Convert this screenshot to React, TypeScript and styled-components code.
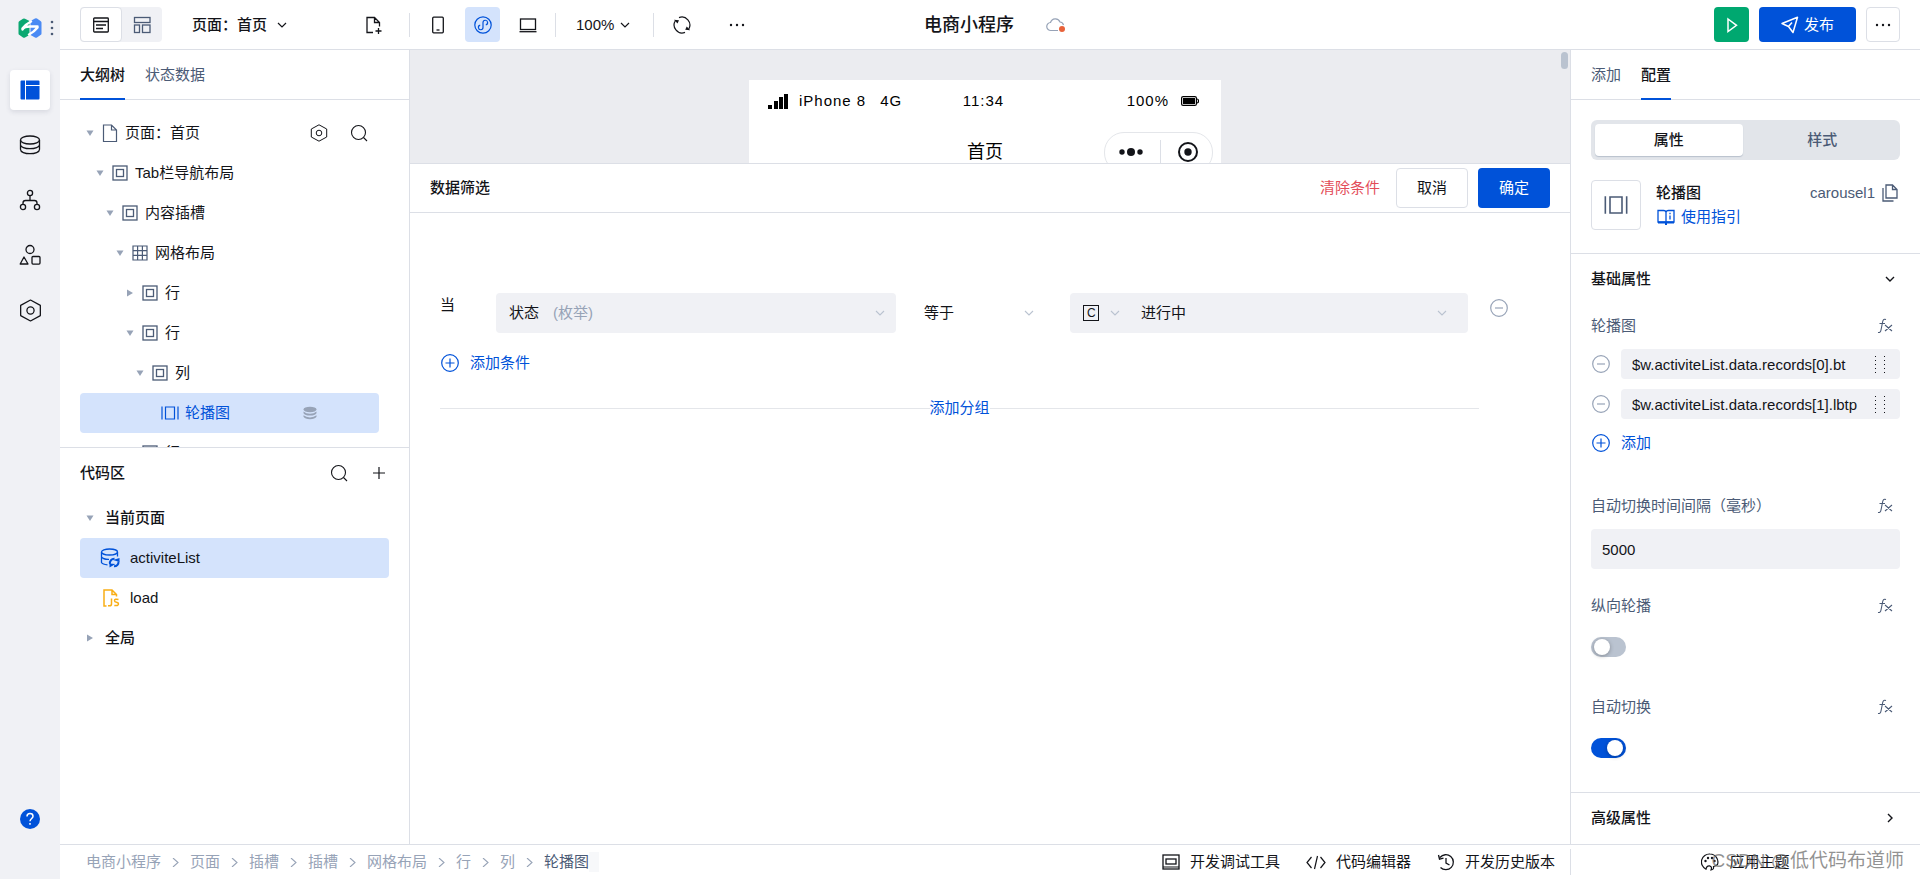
import React from "react";
import styled, { createGlobalStyle, css } from "styled-components";

const c = {
  ink: "#131419",
  muted: "#4b5b76",
  faint: "#97a3b7",
  line: "#dcdfe6",
  fill: "#f0f1f5",
  blue: "#0052d9",
  pale: "#d4e3fc",
  green: "#00a870",
  red: "#e34d59",
};

const GlobalStyle = createGlobalStyle`
  *, *::before, *::after { box-sizing: border-box; }
  body {
    margin: 0;
    background: #fff;
    color: ${c.ink};
    font: 15px/20px "Liberation Sans", "Noto Sans CJK SC", sans-serif;
  }
  button, input, select { font: inherit; color: inherit; margin: 0; }
  button { background: none; border: 0; padding: 0; cursor: pointer; white-space: nowrap; }
  a { color: inherit; text-decoration: none; white-space: nowrap; }
  svg { display: block; flex: none; }
`;

/* ---------- icons ---------- */

type IconProps = { size?: number; color?: string; width?: number };

const Svg = ({
  size = 18,
  color = "currentColor",
  width = 1.3,
  box = 18,
  children,
}: IconProps & { box?: number; children: React.ReactNode }) => (
  <svg
    width={size}
    height={size}
    viewBox={`0 0 ${box} ${box}`}
    fill="none"
    stroke={color}
    strokeWidth={width}
    aria-hidden="true"
  >
    {children}
  </svg>
);

const Chevron = ({ size = 10, color, width = 1.2, right }: IconProps & { right?: boolean }) => (
  <Svg size={size} color={color} width={width} box={10}>
    <path d={right ? "M3 1l4 4-4 4" : "M1 3l4 4 4-4"} />
  </Svg>
);
const Crumb = () => (
  <Svg size={9} color={c.faint} width={1.1} box={9}>
    <path d="M2 0l5 4.5L2 9" />
  </Svg>
);
const Caret = ({ right }: { right?: boolean }) => (
  <svg width="8" height="8" viewBox="0 0 8 8" fill={c.faint} aria-hidden="true">
    <path d={right ? "M1 .5L7 4 1 7.5z" : "M.5 1.5h7L4 7z"} />
  </svg>
);
const Logo = () => (
  <svg width="24" height="20" viewBox="0 0 24 20" aria-hidden="true">
    <path d="M.5 4.500Q.5 3.500 1.500 3L5 .7Q6 .2 7 .7L11.500 3V17L7 19.400Q6 20 5 19.400L1.500 17Q.5 16.500 .5 15.500z" fill="#0ba871" />
    <path d="M12.500 3L17 .6Q18 0 19 .6L22.500 3Q23.500 3.500 23.500 4.500V15.500Q23.500 16.500 22.500 17L19 19.400Q18 20 17 19.400L12.500 17z" fill="#4a8af4" />
    <path d="M4.500 10.500Q8 6 13 3.500M4.500 11.500Q6 8.500 12 8.500T19.500 8.500M19.500 9.500Q16 14 11 16.500" stroke="#fff" strokeWidth="2.500" strokeLinecap="round" fill="none" />
  </svg>
);
const Dots = ({ vertical }: { vertical?: boolean }) => (
  <svg width={vertical ? 4 : 18} height={vertical ? 18 : 4} fill="currentColor" aria-hidden="true">
    {[0, 1, 2].map((i) =>
      vertical ? (
        <circle key={i} cx="2" cy={3 + i * 6} r="1.3" />
      ) : (
        <circle key={i} cx={3 + i * 6} cy="2" r="1.2" />
      ),
    )}
  </svg>
);
const PanelIcon = () => (
  <svg width="20" height="20" viewBox="0 0 20 20" fill={c.blue} aria-hidden="true">
    <path d="M1.500.5H5V19.500H1.500Q.5 19.500.5 18.500V1.500Q.5.5 1.500.5zM6 .5H18.500Q19.500.5 19.500 1.500V5H6zM6 6H19.500V18.500Q19.500 19.500 18.500 19.500H6z" />
  </svg>
);
const Database = () => (
  <Svg size={22} box={22}>
    <ellipse cx="11" cy="6" rx="9.500" ry="4" />
    <path d="M1.500 6V15.500C1.500 18 6 19.700 11 19.700S20.500 18 20.500 15.500V6M1.500 10.800C1.500 13 6 14.700 11 14.700S20.500 13 20.500 10.800" />
  </Svg>
);
const Tree = () => (
  <Svg size={22} box={22}>
    <circle cx="11" cy="4" r="2.600" />
    <circle cx="4" cy="18" r="2.600" />
    <circle cx="18" cy="18" r="2.600" />
    <path d="M11 6.600V11.500M4 15.400V14Q4 11.500 6.500 11.500H15.500Q18 11.500 18 14V15.400" />
  </Svg>
);
const Shapes = () => (
  <Svg size={22} box={22}>
    <circle cx="11" cy="5.500" r="4" />
    <path d="M5 13L9 20H1.200z" strokeLinejoin="round" />
    <rect x="13" y="12.500" width="8" height="7.600" rx="1" />
  </Svg>
);
const Hexagon = ({ size = 18, color }: IconProps) => (
  <Svg size={size} color={color} width={1}>
    <path d="M9 .8L16.700 5V13L9 17.200 1.300 13V5z" strokeLinejoin="round" />
    <circle cx="9" cy="9" r="2.800" />
  </Svg>
);
const HelpIcon = () => (
  <svg width="20" height="20" viewBox="0 0 20 20" fill="none" aria-hidden="true">
    <circle cx="10" cy="10" r="10" fill={c.blue} />
    <path d="M7 7.500C7 5.500 8.300 4.500 10 4.500S13 5.600 13 7.200C13 9.500 10 9.500 10 12.300M10 14V15.800" stroke="#fff" strokeWidth="1.500" />
  </svg>
);
const ListView = () => (
  <Svg width={1.3}>
    <rect x="1.700" y="2" width="14.600" height="14" rx=".8" />
    <path d="M1.700 5.500H16.300M4 9H14M4 12.500H11" />
  </Svg>
);
const GridView = () => (
  <Svg>
    <rect x="1.500" y="1.500" width="15.500" height="5" />
    <rect x="1.500" y="9" width="5" height="7.500" />
    <rect x="9.500" y="9" width="7.500" height="7.500" />
  </Svg>
);
const PageAdd = () => (
  <Svg>
    <path d="M8 16.500H2V1.500H9.500L14.500 6.500V10.500M9.500 1.500V6.500H14.500M13.500 12V18M10.500 15H16.500" />
  </Svg>
);
const PhoneIcon = () => (
  <Svg width={1.3}>
    <rect x="3.700" y="1.200" width="10.600" height="15.600" rx="1" />
    <path d="M7.500 14H10.500" />
  </Svg>
);
const MiniIcon = () => (
  <Svg width={1.2} color={c.blue}>
    <circle cx="9" cy="9" r="8.200" />
    <path d="M9 6.500V11.500A2.300 2.300 0 1 1 6.200 9.200M9 11.500V6.500A2.300 2.300 0 1 1 11.800 8.800" />
  </Svg>
);
const Laptop = () => (
  <Svg>
    <rect x="1.500" y="3" width="15" height="10.500" />
    <path d="M.5 15.700H17.500" />
  </Svg>
);
const Refresh = () => (
  <Svg width={1.200}>
    <path d="M6 1.600A8 8 0 0 1 15.800 13M12 16.400A8 8 0 0 1 2.500 4.500" />
    <path d="M1 3.800L6 4.200 4.500 7.500zM17.200 14.200L12.200 13.800 13.700 10.500z" fill="currentColor" stroke="none" />
  </Svg>
);
const CloudIcon = () => (
  <svg width="20" height="16" viewBox="0 0 20 16" fill="none" aria-hidden="true">
    <path d="M12 13.500H5A4 4 0 0 1 4.500 5.500 5 5 0 0 1 14 5 4 4 0 0 1 17.500 8" stroke={c.faint} strokeWidth="1.200" />
    <circle cx="16" cy="12" r="3" fill="#e8623a" />
  </svg>
);
const PlayIcon = () => (
  <Svg color="#fff" width={1.5}>
    <path d="M5 3L13.500 9.300 5 15.500z" />
  </Svg>
);
const SendIcon = () => (
  <Svg color="#fff" width={1.5}>
    <path d="M1 7.500L16.500 1.300 12 16.500 7.500 10.500zM7.500 10.500L11 6.500" strokeLinejoin="round" />
  </Svg>
);
const SearchIcon = () => (
  <Svg width={1.100}>
    <circle cx="8.500" cy="8.500" r="7" />
    <path d="M13.500 13.500L17 17" />
  </Svg>
);
const PlusIcon = () => (
  <Svg width={1.200}>
    <path d="M9 3V15M3 9H15" />
  </Svg>
);
const FileIcon = () => (
  <Svg color={c.muted} width={1.200}>
    <path d="M2.500 1H10.500L15.500 6V17.500H2.500zM10.500 1V6H15.500" />
  </Svg>
);
const BoxIcon = () => (
  <Svg size={16} box={16} color={c.muted} width={1.300}>
    <rect x="1" y="1" width="14" height="14" />
    <rect x="4.500" y="4.500" width="7" height="7" />
  </Svg>
);
const TableIcon = () => (
  <Svg size={16} box={16} color={c.muted} width={1.200}>
    <path d="M1 1H15V15H1zM5.600 1V15M10.400 1V15M1 5.600H15M1 10.400H15" />
  </Svg>
);
const CarouselIcon = ({ size = 18, color = c.blue }: IconProps) => (
  <Svg size={size} color={color} width={1.200}>
    <path d="M1 2.500V15.500M17 2.500V15.500M4.500 3H13.500V15H4.500z" />
  </Svg>
);
const StackIcon = () => (
  <svg width="14" height="14" viewBox="0 0 14 14" fill={c.faint} aria-hidden="true">
    <ellipse cx="7" cy="3.500" rx="6.500" ry="2.700" />
    <path d="M.5 5.500Q3 7.800 7 7.800T13.500 5.500V7.200Q12 9.500 7 9.500T.5 7.200zM.5 9.300Q3 11.400 7 11.400T13.500 9.300V10.800Q12 13.200 7 13.200T.5 10.800z" />
  </svg>
);
const DataSync = () => (
  <Svg size={20} box={20} color={c.blue} width={1.300}>
    <ellipse cx="9.500" cy="4" rx="8" ry="3" />
    <path d="M1.500 4V14.500Q2.500 16.500 7.500 16.800M17.500 4V8.500M1.500 9Q3.500 11.500 9 11.300" />
    <path d="M10 16A4.300 4.300 0 0 1 14.500 10.800M18.500 13.500A4.300 4.300 0 0 1 14 18.300" strokeWidth="2" />
    <path d="M13 12L19.500 10V14zM15.500 16L9.500 15.500V19.500z" fill={c.blue} stroke="none" />
  </Svg>
);
const ScriptIcon = () => (
  <Svg size={20} box={20} color="#f9ae16" width={1.500}>
    <path d="M6.500 18H4V2H12L16.500 6.500V8.500M12 2V6.500H16.500" />
    <path d="M11.500 10.500V16Q11.500 17.800 9.500 17.800H8M18.500 11.500Q14.500 10.500 14.500 12.700 14.500 14 16.500 14.300 18.500 14.700 18.500 16 18.300 18.200 14.300 17.400" />
  </Svg>
);
const CircleSign = ({ plus, color = c.faint }: { plus?: boolean; color?: string }) => (
  <Svg color={color} width={1.200}>
    <circle cx="9" cy="9" r="8.300" />
    <path d={plus ? "M9 4.500V13.500M4.500 9H13.500" : "M5 9H13"} />
  </Svg>
);
const FormulaIcon = () => (
  <Svg size={16} box={16} width={1.100}>
    <path d="M9 1.500Q6.300.4 5.700 3.500L4 12Q3.500 15 1 14.500M2.500 5.500H8M8 7L15 13M15 7L8 13" />
  </Svg>
);
const GuideIcon = () => (
  <Svg color={c.blue} width={1.300}>
    <path d="M9 3.500V15.500M1 2.500H6.500Q9 2.500 9 4.500 9 2.500 11.500 2.500H17V14H1z" />
    <path d="M1 14.500H17M9 14V17" strokeWidth="2" />
    <path d="M13 7.500V11.500M13 4.800V6.200" />
  </Svg>
);
const CopyIcon = () => (
  <Svg color={c.muted} width={1.300}>
    <path d="M5 1H11.500L16 5.500V14H5zM11.500 1V5.500H16M2 4V17H12.500" />
  </Svg>
);
const GripIcon = () => (
  <svg width="12" height="18" fill={c.ink} aria-hidden="true">
    {[0, 1, 2, 3, 4].map((i) => (
      <React.Fragment key={i}>
        <rect x="1" y={1 + i * 4} width="1" height="1" />
        <rect x="10" y={1 + i * 4} width="1" height="1" />
      </React.Fragment>
    ))}
  </svg>
);
const SignalIcon = () => (
  <svg width="21" height="15" viewBox="0 0 21 15" fill="#000" aria-hidden="true">
    <path d="M0 11H4V15H0zM6 7H10V15H6zM11 3H15V15H11zM16 0H20V15H16z" />
  </svg>
);
const BatteryIcon = () => (
  <svg width="18" height="10" viewBox="0 0 18 10" aria-hidden="true">
    <rect x=".6" y=".6" width="14.800" height="8.800" rx="1.500" fill="none" stroke="#000" strokeWidth="1.200" />
    <rect x="2" y="2" width="12" height="6" fill="#000" />
    <path d="M16 3Q17.500 3 17.500 5T16 7" fill="none" stroke="#000" strokeWidth="1.200" />
  </svg>
);
const DebugIcon = () => (
  <Svg>
    <rect x="1" y="2" width="16" height="14" />
    <rect x="4" y="6" width="10" height="5" />
    <path d="M1 14H17" strokeWidth="1" />
  </Svg>
);
const CodeIcon = () => (
  <Svg size={20} box={20} width={1.200}>
    <path d="M5.500 5L1 10.500 5.500 16M14.500 5L19 10.500 14.500 16M11.500 4L8.500 17" />
  </Svg>
);
const HistoryIcon = () => (
  <Svg width={1.300}>
    <path d="M3 4.500A7.500 7.500 0 1 1 3.500 14.500M1.500 2L2.500 6.200 6.500 5.200M9 5V10L12.500 12" />
  </Svg>
);
const PaletteIcon = () => (
  <Svg width={1.200}>
    <path d="M9 1A8 8 0 0 0 5 16.200Q5.500 12.500 8.500 12.800 11.500 13.500 10 17 13 16.800 12.500 13.500 15 13 16.500 11.500A8 8 0 0 0 9 1z" />
    <g fill="currentColor" stroke="none">
      <circle cx="4.500" cy="8" r="1.200" />
      <circle cx="7" cy="5" r="1.200" />
      <circle cx="11" cy="5" r="1.200" />
      <circle cx="13.500" cy="8" r="1.200" />
    </g>
  </Svg>
);

/* ---------- shell ---------- */

const Shell = styled.div`
  display: flex;
  height: 100vh;
  overflow: hidden;
`;
const Rail = styled.nav`
  flex: 0 0 60px;
  display: flex;
  flex-direction: column;
  align-items: center;
  gap: 15px;
  background: ${c.fill};
`;
const Brand = styled.div`
  display: flex;
  align-items: center;
  gap: 8px;
  align-self: stretch;
  height: 55px;
  padding-left: 18px;
  color: ${c.muted};
`;
const RailButton = styled.button<{ $active?: boolean }>`
  display: grid;
  place-items: center;
  width: 40px;
  height: 40px;
  border-radius: 4px;
  ${(p) => p.$active && css`background: #fff; box-shadow: 0 2px 5px rgba(30, 40, 70, 0.12);`}
`;
const HelpButton = styled(RailButton)`
  margin: auto 0 40px;
`;
const Main = styled.div`
  flex: 1;
  min-width: 0;
  display: flex;
  flex-direction: column;
`;

/* ---------- top bar ---------- */

const TopBar = styled.header`
  flex: 0 0 50px;
  display: grid;
  grid-template-columns: 1fr auto 1fr;
  align-items: center;
  padding: 0 20px;
  border-bottom: 1px solid ${c.line};
`;
const Tools = styled.div`
  display: flex;
  align-items: center;
`;
const ViewSwitch = styled.div`
  display: flex;
  background: ${c.fill};
  border-radius: 4px;
`;
const ViewButton = styled.button<{ $active?: boolean }>`
  display: grid;
  place-items: center;
  width: ${(p) => (p.$active ? 42 : 40)}px;
  height: 35px;
  border-radius: 4px;
  color: ${(p) => (p.$active ? c.ink : c.muted)};
  ${(p) => p.$active && css`background: #fff; border: 1px solid ${c.line};`}
`;
const PageButton = styled.button`
  display: flex;
  align-items: center;
  gap: 10px;
  width: 163px;
  margin-left: 30px;
  font-weight: 500;
`;
const ToolButton = styled.button<{ $active?: boolean }>`
  display: grid;
  place-items: center;
  width: 35px;
  height: 35px;
  border-radius: 4px;
  background: ${(p) => (p.$active ? c.pale : "none")};
`;
const Devices = styled.div`
  display: flex;
  gap: 10px;
  padding: 0 10px;
`;
const Rule = styled.span`
  width: 1px;
  height: 24px;
  background: ${c.line};
`;
const PageAddWrap = styled.div`
  padding: 0 18px 0 1px;
`;
const ZoomButton = styled.button`
  display: flex;
  align-items: center;
  gap: 6px;
  padding: 0 23px 0 20px;
`;
const MoreTools = styled.div`
  display: flex;
  gap: 20px;
  padding: 0 10px;
`;
const AppTitle = styled.div`
  display: flex;
  align-items: center;
  gap: 32px;
  padding-left: 10px;
`;
const AppName = styled.h1`
  margin: 0;
  font-size: 18px;
  line-height: 24px;
  font-weight: 500;
`;
const Actions = styled.div`
  display: flex;
  justify-content: flex-end;
  gap: 10px;
`;
const ActionButton = styled.button<{ $kind: "run" | "publish" | "plain" }>`
  display: flex;
  align-items: center;
  justify-content: center;
  gap: 5px;
  height: 35px;
  width: 35px;
  border-radius: 4px;
  ${(p) => p.$kind === "run" && css`background: ${c.green};`}
  ${(p) => p.$kind === "publish" && css`width: 97px; background: ${c.blue}; color: #fff;`}
  ${(p) => p.$kind === "plain" && css`width: 34px; background: #fff; border: 1px solid ${c.line};`}
`;

/* ---------- shared panel parts ---------- */

const Workspace = styled.div`
  flex: 1;
  min-height: 0;
  display: flex;
`;
const Tabs = styled.div`
  flex: none;
  display: flex;
  gap: 20px;
  height: 50px;
  padding: 0 20px;
  border-bottom: 1px solid ${c.line};
`;
const Tab = styled.button<{ $active?: boolean }>`
  height: 50px;
  padding-top: 2px;
  border-bottom: 2px solid ${(p) => (p.$active ? c.blue : "transparent")};
  color: ${(p) => (p.$active ? c.ink : c.muted)};
  font-weight: ${(p) => (p.$active ? 500 : 400)};
`;
const IconButton = styled.button`
  display: grid;
  place-items: center;
  width: 20px;
  height: 20px;
`;

/* ---------- left panel ---------- */

const LeftPanel = styled.aside`
  flex: 0 0 350px;
  display: flex;
  flex-direction: column;
  border-right: 1px solid ${c.line};
`;
const OutlineArea = styled.div`
  flex: 334 1 0;
  min-height: 0;
  overflow: hidden;
  padding: 13px 30px 0 20px;
`;
const CodeArea = styled.div`
  flex: 396 1 0;
  min-height: 0;
  overflow: hidden;
  padding: 0 20px;
  border-top: 1px solid ${c.line};
`;
const Row = styled.div<{ $selected?: boolean }>`
  display: flex;
  align-items: center;
  height: 40px;
  border-radius: 4px;
  ${(p) => p.$selected && css`background: ${c.pale};`}
`;
const NodeButton = styled.button<{ $depth: number; $selected?: boolean }>`
  flex: 1;
  display: flex;
  align-items: center;
  height: 40px;
  padding-left: ${(p) => p.$depth * 10}px;
  color: ${(p) => (p.$selected ? c.blue : c.ink)};
`;
const Slot = styled.span`
  flex: 0 0 20px;
  display: grid;
  place-items: center;
`;
const NodeLabel = styled.span`
  padding-left: 5px;
`;
const RowActions = styled.div<{ $end: number }>`
  display: flex;
  gap: 20px;
  padding-right: ${(p) => p.$end}px;
`;
const CodeHeader = styled.div`
  display: flex;
  align-items: center;
  justify-content: space-between;
  height: 50px;
`;
const CodeTitle = styled.h2`
  margin: 0;
  font-size: 15px;
  line-height: 20px;
  font-weight: 500;
`;
const GroupButton = styled.button`
  flex: 1;
  display: flex;
  align-items: center;
  gap: 5px;
  height: 40px;
  font-weight: 500;
`;
const CodeButton = styled.button`
  flex: 1;
  display: flex;
  align-items: center;
  gap: 10px;
  height: 40px;
  padding-left: 20px;
`;

/* ---------- canvas ---------- */

const Center = styled.main`
  flex: 1;
  min-width: 0;
  display: flex;
  flex-direction: column;
`;
const Canvas = styled.section`
  position: relative;
  flex: 0 0 113px;
  overflow: hidden;
  padding: 30px 10px 0 0;
  background: #ebecf0;
`;
const ScrollThumb = styled.span`
  position: absolute;
  top: 2px;
  right: 2px;
  width: 7px;
  height: 17px;
  border-radius: 4px;
  background: #bac3d0;
`;
const Phone = styled.div`
  width: 472px;
  margin: 0 auto;
  background: #fff;
  color: #000;
`;
const PhoneStatus = styled.div`
  display: grid;
  grid-template-columns: 1fr auto 1fr;
  align-items: center;
  height: 42px;
  padding: 0 22px 0 19px;
  letter-spacing: 1px;
`;
const StatusGroup = styled.div<{ $end?: boolean }>`
  display: flex;
  align-items: center;
  gap: ${(p) => (p.$end ? 12 : 10)}px;
  justify-content: ${(p) => (p.$end ? "flex-end" : "flex-start")};
`;
const Carrier = styled.span`
  padding-right: 4px;
`;
const PhoneNav = styled.div`
  display: grid;
  grid-template-columns: 1fr auto 1fr;
  align-items: center;
  height: 60px;
  padding: 0 8px;
`;
const PhoneTitle = styled.span`
  grid-column: 2;
  font-size: 18px;
`;
const Capsule = styled.div`
  justify-self: end;
  display: flex;
  align-items: center;
  justify-content: center;
  gap: 17px;
  width: 109px;
  height: 41px;
  border: 1px solid #e4e6ea;
  border-radius: 20px;
`;

/* ---------- data filter ---------- */

const FilterHeader = styled.div`
  flex: none;
  display: flex;
  align-items: center;
  justify-content: space-between;
  height: 50px;
  padding: 0 20px;
  border-top: 1px solid ${c.line};
  border-bottom: 1px solid ${c.line};
`;
const FilterActions = styled.div`
  display: flex;
  align-items: center;
  gap: 10px;
`;
const ClearButton = styled.button`
  padding-right: 6px;
  color: ${c.red};
`;
const DialogButton = styled.button<{ $primary?: boolean }>`
  width: 72px;
  height: 40px;
  border-radius: 4px;
  ${(p) => (p.$primary ? css`background: ${c.blue}; color: #fff;` : css`border: 1px solid ${c.line};`)}
`;
const FilterBody = styled.div`
  padding: 80px 61px 0 30px;
`;
const Condition = styled.div`
  display: grid;
  grid-template-columns: 56px minmax(0, 400fr) 174px minmax(0, 398fr) 41px;
`;
const When = styled.span`
  padding-top: 2px;
`;
const Field = styled.div<{ $split?: boolean; $plain?: boolean }>`
  display: grid;
  grid-template-columns: ${(p) => (p.$split ? "60px 1fr" : "1fr")};
  height: 40px;
  border-radius: 4px;
  background: ${(p) => (p.$plain ? "none" : c.fill)};
`;
const SelectBox = styled.div<{ $end: number }>`
  display: grid;
  align-items: center;
  padding-right: ${(p) => p.$end}px;
  > * { grid-area: 1 / 1; }
  > svg:last-child { justify-self: end; pointer-events: none; }
`;
const Select = styled.select<{ $start: number; $small?: boolean }>`
  appearance: none;
  width: 100%;
  height: 40px;
  padding: 0 0 0 ${(p) => p.$start}px;
  border: 0;
  background: transparent;
  font-size: ${(p) => (p.$small ? 12 : 15)}px;
  line-height: 20px;
`;
const TypeHint = styled.span`
  padding-left: 57px;
  color: ${c.faint};
  pointer-events: none;
`;
const ConstFrame = styled.span`
  width: 16px;
  height: 16px;
  margin-left: 13px;
  border: 1px solid ${c.ink};
  pointer-events: none;
`;
const RemoveSlot = styled.div`
  display: flex;
  justify-content: flex-end;
  align-items: flex-start;
  padding-top: 5px;
`;
const LinkButton = styled.button<{ $gap: number }>`
  display: flex;
  align-items: center;
  gap: ${(p) => p.$gap}px;
  color: ${c.blue};
`;
const AddCondition = styled(LinkButton)`
  margin: 20px 0 25px 1px;
`;
const GroupDivider = styled.div`
  display: flex;
  align-items: center;
  margin-right: 30px;
  color: ${c.blue};
  &::before, &::after {
    content: "";
    flex: 1;
    height: 1px;
    background: #e4e6ea;
  }
`;

/* ---------- right panel ---------- */

const RightPanel = styled.aside`
  flex: 0 0 350px;
  display: flex;
  flex-direction: column;
  border-left: 1px solid ${c.line};
`;
const Summary = styled.div`
  display: flex;
  flex-direction: column;
  gap: 20px;
  padding: 20px 20px 23px;
  border-bottom: 1px solid ${c.line};
`;
const Segment = styled.div`
  display: grid;
  grid-template-columns: 1fr 1fr;
  gap: 6px;
  height: 40px;
  padding: 4px;
  border-radius: 6px;
  background: #e2e5ea;
`;
const SegmentButton = styled.button<{ $active?: boolean }>`
  border-radius: 4px;
  font-weight: 500;
  color: ${(p) => (p.$active ? c.ink : c.muted)};
  ${(p) => p.$active && css`background: #fff; box-shadow: 0 1px 1px #b8c0cc;`}
`;
const Identity = styled.div`
  display: flex;
  gap: 15px;
`;
const Tile = styled.div`
  display: grid;
  place-items: center;
  width: 50px;
  height: 50px;
  border: 1px solid ${c.line};
  border-radius: 4px;
`;
const IdentityText = styled.div`
  display: flex;
  flex-direction: column;
  gap: 4px;
  padding-top: 3px;
`;
const ComponentName = styled.span`
  font-weight: 500;
`;
const GuideLink = styled.a`
  display: flex;
  align-items: center;
  gap: 6px;
  padding-left: 1px;
  color: ${c.blue};
`;
const ComponentId = styled.div`
  display: flex;
  align-items: center;
  gap: 5px;
  height: 26px;
  margin-left: auto;
  color: ${c.muted};
`;
const SectionButton = styled.button`
  flex: none;
  display: flex;
  align-items: center;
  justify-content: space-between;
  width: 100%;
  height: 50px;
  padding: 0 25px 0 20px;
  font-weight: 500;
`;
const Properties = styled.div`
  flex: 1;
  min-height: 0;
  overflow: hidden;
  padding: 12px 20px 0;
`;
const Property = styled.div<{ $after: number }>`
  margin-bottom: ${(p) => p.$after}px;
`;
const PropertyHead = styled.div<{ $gap?: number }>`
  display: flex;
  align-items: center;
  justify-content: space-between;
  margin-bottom: ${(p) => p.$gap ?? 13}px;
  padding-right: 5px;
  color: ${c.muted};
`;
const PropertyName = styled.label`
  white-space: nowrap;
`;
const SlideRow = styled.div`
  display: grid;
  grid-template-columns: 30px 1fr;
  align-items: center;
  margin-bottom: 10px;
`;
const SlideBox = styled.div`
  display: flex;
  align-items: center;
  height: 30px;
  padding-right: 14px;
  border-radius: 4px;
  background: ${c.fill};
`;
const SlideInput = styled.input`
  flex: 1;
  min-width: 0;
  height: 30px;
  padding: 0 0 0 11px;
  border: 0;
  background: transparent;
`;
const AddSlide = styled(LinkButton)`
  margin: 14px 0 0 1px;
`;
const NumberInput = styled.input`
  width: 100%;
  height: 40px;
  padding: 0 11px;
  border: 0;
  border-radius: 4px;
  background: ${c.fill};
`;
const Switch = styled.input`
  appearance: none;
  display: block;
  width: 35px;
  height: 20px;
  margin: 0;
  padding: 2px 3px;
  border-radius: 10px;
  background: #bac3d0;
  &::before {
    content: "";
    display: block;
    width: 16px;
    height: 16px;
    border-radius: 50%;
    background: #fff;
    box-shadow: 0 1px 4px rgba(0, 0, 0, 0.3);
  }
  &:checked { background: ${c.blue}; }
  &:checked::before { margin-left: auto; }
`;
const AdvancedWrap = styled.div`
  flex: none;
  border-top: 1px solid ${c.line};
  height: 52px;
`;

/* ---------- bottom bar ---------- */

const BottomBar = styled.footer`
  flex: 0 0 35px;
  display: flex;
  align-items: center;
  border-top: 1px solid ${c.line};
`;
const Crumbs = styled.nav`
  flex: 1;
  display: flex;
  align-items: center;
  gap: 10px;
  padding-left: 26px;
  color: ${c.faint};
`;
const CurrentCrumb = styled.a`
  padding-right: 10px;
  color: ${c.muted};
  background: linear-gradient(to left, #f7f8fa 10px, transparent 10px);
`;
const DevTools = styled.div`
  display: flex;
  gap: 26px;
  padding-right: 15px;
`;
const DevButton = styled.button`
  display: flex;
  align-items: center;
  gap: 10px;
`;
const ThemeArea = styled.div`
  position: relative;
  flex: 0 0 350px;
  display: flex;
  justify-content: center;
  height: 26px;
  border-left: 1px solid ${c.line};
`;
const Watermark = styled.span`
  position: absolute;
  right: 16px;
  top: 0;
  font-size: 19px;
  line-height: 24px;
  color: rgba(110, 110, 110, 0.75);
  white-space: nowrap;
`;

/* ---------- data ---------- */

type Node = { depth: number; label: string; icon: React.ReactNode; caret?: "down" | "right" };

const nodes: Node[] = [
  { depth: 1, label: "Tab栏导航布局", icon: <BoxIcon />, caret: "down" },
  { depth: 2, label: "内容插槽", icon: <BoxIcon />, caret: "down" },
  { depth: 3, label: "网格布局", icon: <TableIcon />, caret: "down" },
  { depth: 4, label: "行", icon: <BoxIcon />, caret: "right" },
  { depth: 4, label: "行", icon: <BoxIcon />, caret: "down" },
  { depth: 5, label: "列", icon: <BoxIcon />, caret: "down" },
];

const crumbs = ["电商小程序", "页面", "插槽", "插槽", "网格布局", "行", "列"];
const slides = ["$w.activiteList.data.records[0].bt", "$w.activiteList.data.records[1].lbtp"];

const TreeNode = ({
  node,
  selected,
  children,
}: {
  node: Node;
  selected?: boolean;
  children?: React.ReactNode;
}) => (
  <Row $selected={selected}>
    <NodeButton $depth={node.depth} $selected={selected}>
      <Slot>{node.caret && <Caret right={node.caret === "right"} />}</Slot>
      <Slot>{node.icon}</Slot>
      <NodeLabel>{node.label}</NodeLabel>
    </NodeButton>
    {children}
  </Row>
);

const FormulaButton = () => (
  <IconButton aria-label="表达式">
    <FormulaIcon />
  </IconButton>
);

export default function App() {
  return (
    <>
      <GlobalStyle />
      <Shell>
        <Rail>
          <Brand>
            <Logo />
            <Dots vertical />
          </Brand>
          <RailButton $active aria-label="页面"><PanelIcon /></RailButton>
          <RailButton aria-label="数据"><Database /></RailButton>
          <RailButton aria-label="流程"><Tree /></RailButton>
          <RailButton aria-label="素材"><Shapes /></RailButton>
          <RailButton aria-label="设置"><Hexagon size={23} /></RailButton>
          <HelpButton aria-label="帮助"><HelpIcon /></HelpButton>
        </Rail>
        <Main>
          <TopBar>
            <Tools>
              <ViewSwitch>
                <ViewButton $active aria-label="列表视图"><ListView /></ViewButton>
                <ViewButton aria-label="布局视图"><GridView /></ViewButton>
              </ViewSwitch>
              <PageButton>页面：首页<Chevron /></PageButton>
              <PageAddWrap>
                <ToolButton aria-label="新建页面"><PageAdd /></ToolButton>
              </PageAddWrap>
              <Rule />
              <Devices>
                <ToolButton aria-label="手机"><PhoneIcon /></ToolButton>
                <ToolButton $active aria-label="小程序"><MiniIcon /></ToolButton>
                <ToolButton aria-label="电脑"><Laptop /></ToolButton>
              </Devices>
              <Rule />
              <ZoomButton>100%<Chevron /></ZoomButton>
              <Rule />
              <MoreTools>
                <ToolButton aria-label="刷新"><Refresh /></ToolButton>
                <ToolButton aria-label="更多工具"><Dots /></ToolButton>
              </MoreTools>
            </Tools>
            <AppTitle>
              <AppName>电商小程序</AppName>
              <CloudIcon />
            </AppTitle>
            <Actions>
              <ActionButton $kind="run" aria-label="预览"><PlayIcon /></ActionButton>
              <ActionButton $kind="publish"><SendIcon />发布</ActionButton>
              <ActionButton $kind="plain" aria-label="更多"><Dots /></ActionButton>
            </Actions>
          </TopBar>

          <Workspace>
            <LeftPanel>
              <Tabs>
                <Tab $active>大纲树</Tab>
                <Tab>状态数据</Tab>
              </Tabs>
              <OutlineArea>
                <TreeNode node={{ depth: 0, label: "页面：首页", icon: <FileIcon />, caret: "down" }}>
                  <RowActions $end={10}>
                    <IconButton aria-label="页面设置"><Hexagon size={18} /></IconButton>
                    <IconButton aria-label="搜索组件"><SearchIcon /></IconButton>
                  </RowActions>
                </TreeNode>
                {nodes.map((n, i) => (
                  <TreeNode key={i} node={n} />
                ))}
                <TreeNode node={{ depth: 6, label: "轮播图", icon: <CarouselIcon /> }} selected>
                  <RowActions $end={59}>
                    <IconButton aria-label="数据绑定"><StackIcon /></IconButton>
                  </RowActions>
                </TreeNode>
                <TreeNode node={{ depth: 4, label: "行", icon: <BoxIcon /> }} />
              </OutlineArea>
              <CodeArea>
                <CodeHeader>
                  <CodeTitle>代码区</CodeTitle>
                  <RowActions $end={0}>
                    <IconButton aria-label="搜索代码"><SearchIcon /></IconButton>
                    <IconButton aria-label="新建代码"><PlusIcon /></IconButton>
                  </RowActions>
                </CodeHeader>
                <Row>
                  <GroupButton><Slot><Caret /></Slot>当前页面</GroupButton>
                </Row>
                <Row $selected>
                  <CodeButton><DataSync />activiteList</CodeButton>
                </Row>
                <Row>
                  <CodeButton><ScriptIcon />load</CodeButton>
                </Row>
                <Row>
                  <GroupButton><Slot><Caret right /></Slot>全局</GroupButton>
                </Row>
              </CodeArea>
            </LeftPanel>

            <Center>
              <Canvas>
                <Phone>
                  <PhoneStatus>
                    <StatusGroup>
                      <SignalIcon />
                      <Carrier>iPhone 8</Carrier>
                      <span>4G</span>
                    </StatusGroup>
                    <span>11:34</span>
                    <StatusGroup $end>
                      <span>100%</span>
                      <BatteryIcon />
                    </StatusGroup>
                  </PhoneStatus>
                  <PhoneNav>
                    <PhoneTitle>首页</PhoneTitle>
                    <Capsule>
                      <svg width="24" height="10" fill={c.ink} aria-hidden="true">
                        <circle cx="3" cy="5" r="2.7" />
                        <circle cx="12" cy="5" r="4" />
                        <circle cx="21" cy="5" r="2.7" />
                      </svg>
                      <Rule />
                      <svg width="20" height="20" aria-hidden="true">
                        <circle cx="10" cy="10" r="9" fill="none" stroke={c.ink} strokeWidth="2" />
                        <circle cx="10" cy="10" r="3.7" fill={c.ink} />
                      </svg>
                    </Capsule>
                  </PhoneNav>
                </Phone>
                <ScrollThumb />
              </Canvas>
              <FilterHeader>
                <CodeTitle>数据筛选</CodeTitle>
                <FilterActions>
                  <ClearButton>清除条件</ClearButton>
                  <DialogButton>取消</DialogButton>
                  <DialogButton $primary>确定</DialogButton>
                </FilterActions>
              </FilterHeader>
              <FilterBody>
                <Condition>
                  <When>当</When>
                  <Field>
                    <SelectBox $end={11}>
                      <Select $start={13} aria-label="字段"><option>状态</option></Select>
                      <TypeHint>(枚举)</TypeHint>
                      <Chevron color="#bac3d0" width={1.1} />
                    </SelectBox>
                  </Field>
                  <Field $plain>
                    <SelectBox $end={36}>
                      <Select $start={28} aria-label="比较方式"><option>等于</option></Select>
                      <Chevron color="#bac3d0" width={1.1} />
                    </SelectBox>
                  </Field>
                  <Field $split>
                    <SelectBox $end={10}>
                      <ConstFrame />
                      <Select $start={17} $small aria-label="值类型"><option>C</option></Select>
                      <Chevron color="#bac3d0" width={1.1} />
                    </SelectBox>
                    <SelectBox $end={21}>
                      <Select $start={11} aria-label="值"><option>进行中</option></Select>
                      <Chevron color="#bac3d0" width={1.1} />
                    </SelectBox>
                  </Field>
                  <RemoveSlot>
                    <IconButton aria-label="删除条件"><CircleSign /></IconButton>
                  </RemoveSlot>
                </Condition>
                <AddCondition $gap={11}>
                  <CircleSign plus color={c.blue} />
                  添加条件
                </AddCondition>
                <GroupDivider>
                  <button>添加分组</button>
                </GroupDivider>
              </FilterBody>
            </Center>

            <RightPanel>
              <Tabs>
                <Tab>添加</Tab>
                <Tab $active>配置</Tab>
              </Tabs>
              <Summary>
                <Segment>
                  <SegmentButton $active>属性</SegmentButton>
                  <SegmentButton>样式</SegmentButton>
                </Segment>
                <Identity>
                  <Tile><CarouselIcon size={24} color={c.muted} /></Tile>
                  <IdentityText>
                    <ComponentName>轮播图</ComponentName>
                    <GuideLink href="#guide"><GuideIcon />使用指引</GuideLink>
                  </IdentityText>
                  <ComponentId>
                    carousel1
                    <IconButton aria-label="复制标识"><CopyIcon /></IconButton>
                  </ComponentId>
                </Identity>
              </Summary>
              <SectionButton>基础属性<Chevron width={1.4} /></SectionButton>
              <Properties>
                <Property $after={43}>
                  <PropertyHead>
                    <PropertyName htmlFor="slide-0">轮播图</PropertyName>
                    <FormulaButton />
                  </PropertyHead>
                  {slides.map((s, i) => (
                    <SlideRow key={s}>
                      <IconButton aria-label={`删除第${i + 1}项`}><CircleSign /></IconButton>
                      <SlideBox>
                        <SlideInput id={`slide-${i}`} aria-label={`轮播图第${i + 1}项`} defaultValue={s} />
                        <GripIcon />
                      </SlideBox>
                    </SlideRow>
                  ))}
                  <AddSlide $gap={11}>
                    <CircleSign plus color={c.blue} />
                    添加
                  </AddSlide>
                </Property>
                <Property $after={27}>
                  <PropertyHead>
                    <PropertyName htmlFor="interval">自动切换时间间隔（毫秒）</PropertyName>
                    <FormulaButton />
                  </PropertyHead>
                  <NumberInput id="interval" defaultValue="5000" />
                </Property>
                <Property $after={40}>
                  <PropertyHead $gap={21}>
                    <PropertyName htmlFor="vertical">纵向轮播</PropertyName>
                    <FormulaButton />
                  </PropertyHead>
                  <Switch id="vertical" type="checkbox" role="switch" />
                </Property>
                <Property $after={0}>
                  <PropertyHead $gap={21}>
                    <PropertyName htmlFor="autoplay">自动切换</PropertyName>
                    <FormulaButton />
                  </PropertyHead>
                  <Switch id="autoplay" type="checkbox" role="switch" defaultChecked />
                </Property>
              </Properties>
              <AdvancedWrap>
                <SectionButton>高级属性<Chevron right width={1.4} /></SectionButton>
              </AdvancedWrap>
            </RightPanel>
          </Workspace>

          <BottomBar>
            <Crumbs aria-label="路径">
              {crumbs.map((name, i) => (
                <React.Fragment key={i}>
                  <a href="#node">{name}</a>
                  <Crumb />
                </React.Fragment>
              ))}
              <CurrentCrumb href="#node">轮播图</CurrentCrumb>
            </Crumbs>
            <DevTools>
              <DevButton><DebugIcon />开发调试工具</DevButton>
              <DevButton><CodeIcon />代码编辑器</DevButton>
              <DevButton><HistoryIcon />开发历史版本</DevButton>
            </DevTools>
            <ThemeArea>
              <DevButton><PaletteIcon />应用主题</DevButton>
              <Watermark>CSDN @低代码布道师</Watermark>
            </ThemeArea>
          </BottomBar>
        </Main>
      </Shell>
    </>
  );
}
